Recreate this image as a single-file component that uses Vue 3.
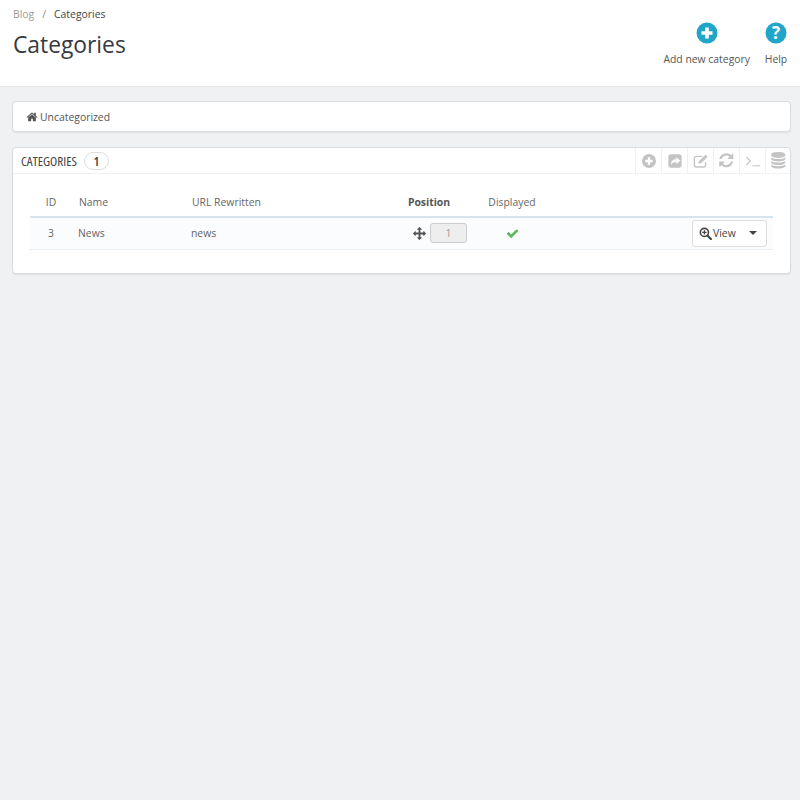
<template>
  <div class="page">
    <header class="page-head">
      <div class="head-left">
        <nav class="crumbs">
          <span class="crumb-link">Blog</span>
          <span class="crumb-sep">/</span>
          <span class="crumb-current">Categories</span>
        </nav>
        <h1>Categories</h1>
      </div>
      <div class="head-actions">
        <div class="head-action">
          <svg class="head-icon" viewBox="0 0 24 24">
            <circle cx="12" cy="12" r="10.5" fill="#21a6c9" />
            <path d="M12 6.5v11M6.5 12h11" stroke="#fff" stroke-width="3.6" />
          </svg>
          <span>Add new category</span>
        </div>
        <div class="head-action">
          <svg class="head-icon" viewBox="0 0 24 24">
            <circle cx="12" cy="12" r="10.5" fill="#21a6c9" />
            <text x="12" y="18" text-anchor="middle" class="q-mark">?</text>
          </svg>
          <span>Help</span>
        </div>
      </div>
    </header>

    <main class="content">
      <div class="tree-bar">
        <svg class="home-icon" viewBox="0 0 1792 1792">
          <path fill="#555" d="M1472 992v480q0 26-19 45t-45 19h-384v-384h-256v384h-384q-26 0-45-19t-19-45v-480q0-1 .5-3t.5-3l575-474 575 474q1 2 1 6zm223-69l-62 74q-8 9-21 11h-3q-13 0-21-7l-692-577-692 577q-12 8-24 7-13-2-21-11l-62-74q-8-10-7-23.5t11-21.5l719-599q32-26 76-26t76 26l244 204v-195q0-14 9-23t23-9h192q14 0 23 9t9 23v408l219 182q10 8 11 21.5t-7 23.5z" />
        </svg>
        <span>Uncategorized</span>
      </div>

      <section class="panel">
        <div class="panel-head">
          <div class="panel-title">
            <span class="title-text">CATEGORIES</span>
            <span class="badge">1</span>
          </div>
          <div class="tools">
            <div class="tool">
              <svg viewBox="0 0 24 24">
                <circle cx="12" cy="12" r="10.5" fill="#c4c4c4" />
                <path d="M12 6.5v11M6.5 12h11" stroke="#fff" stroke-width="3.4" />
              </svg>
            </div>
            <div class="tool">
              <svg viewBox="0 0 24 24">
                <rect x="2" y="2" width="20" height="20" rx="4" fill="#c4c4c4" />
                <path d="M6 18c0-6 3-8.500 8-8.500V6l6 5.500-6 5.500v-3.500c-4 0-6 1-8 4.500z" fill="#fff" />
              </svg>
            </div>
            <div class="tool">
              <svg viewBox="0 0 24 24">
                <path d="M19 14v4a3 3 0 0 1-3 3H5a3 3 0 0 1-3-3V8a3 3 0 0 1 3-3h9" fill="none" stroke="#c4c4c4" stroke-width="2" />
                <path d="M9 12L19 2.500l3 3L12 15.500l-4 .8z" fill="#c4c4c4" />
              </svg>
            </div>
            <div class="tool">
              <svg class="fa" viewBox="0 0 1792 1792">
                <path fill="#c4c4c4" d="M1639 1056q0 5-1 7-64 268-268 434.500t-478 166.500q-146 0-282.500-55t-243.500-157l-129 129q-19 19-45 19t-45-19-19-45v-448q0-26 19-45t45-19h448q26 0 45 19t19 45-19 45l-137 137q71 66 161 102t187 36q134 0 250-65t186-179q11-17 53-117 8-23 30-23h192q13 0 22.500 9.500t9.500 22.500zm25-800v448q0 26-19 45t-45 19h-448q-26 0-45-19t-19-45 19-45l138-138q-148-137-349-137-134 0-250 65t-186 179q-11 17-53 117-8 23-30 23h-199q-13 0-22.500-9.500t-9.500-22.500v-7q65-268 270-434.500t480-166.500q146 0 284 55.500t245 156.500l130-129q19-19 45-19t45 19 19 45z" />
              </svg>
            </div>
            <div class="tool">
              <svg viewBox="0 0 24 24">
                <path d="M2 6l6 6-6 6M11 19h12" fill="none" stroke="#c4c4c4" stroke-width="1.600" />
              </svg>
            </div>
            <div class="tool">
              <svg class="fa" viewBox="0 0 1792 1792">
                <path fill="#c4c4c4" d="M896 768q237 0 443-43t325-127v170q0 69-103 128t-280 93.500-385 34.500-385-34.500-280-93.500-103-128v-170q119 84 325 127t443 43zm0 768q237 0 443-43t325-127v170q0 69-103 128t-280 93.500-385 34.500-385-34.500-280-93.500-103-128v-170q119 84 325 127t443 43zm0-384q237 0 443-43t325-127v170q0 69-103 128t-280 93.500-385 34.500-385-34.500-280-93.500-103-128v-170q119 84 325 127t443 43zm0-1152q208 0 385 34.500t280 93.500 103 128v128q0 69-103 128t-280 93.500-385 34.500-385-34.500-280-93.500-103-128v-128q0-69 103-128t280-93.500 385-34.500z" />
              </svg>
            </div>
          </div>
        </div>

        <table class="grid">
          <thead>
            <tr>
              <th class="col-id">ID</th>
              <th class="col-name">Name</th>
              <th class="col-url">URL Rewritten</th>
              <th class="col-pos">Position</th>
              <th class="col-shown">Displayed</th>
              <th class="col-act"></th>
            </tr>
          </thead>
          <tbody>
            <tr v-for="row in rows" :key="row.id">
              <td class="col-id">{{ row.id }}</td>
              <td class="col-name">{{ row.name }}</td>
              <td class="col-url">{{ row.url }}</td>
              <td class="col-pos">
                <div class="pos-cell">
                  <svg class="move-icon" viewBox="0 0 1792 1792">
                    <path fill="#555" d="M1792 896q0 26-19 45l-256 256q-19 19-45 19t-45-19-19-45v-128h-384v384h128q26 0 45 19t19 45-19 45l-256 256q-19 19-45 19t-45-19l-256-256q-19-19-19-45t19-45 45-19h128v-384h-384v128q0 26-19 45t-45 19-45-19l-256-256q-19-19-19-45t19-45l256-256q19-19 45-19t45 19 19 45v128h384v-384h-128q-26 0-45-19t-19-45 19-45l256-256q19-19 45-19t45 19l256 256q19 19 19 45t-19 45-45 19h-128v384h384v-128q0-26 19-45t45-19 45 19l256 256q19 19 19 45z" />
                  </svg>
                  <span class="pos-box">{{ row.position }}</span>
                </div>
              </td>
              <td class="col-shown">
                <svg class="check-icon" viewBox="0 0 1792 1792">
                  <path fill="#5cb85c" d="M1671 566q0 40-28 68l-724 724-136 136q-28 28-68 28t-68-28l-136-136-362-362q-28-28-28-68t28-68l136-136q28-28 68-28t68 28l294 295 656-657q28-28 68-28t68 28l136 136q28 28 28 68z" />
                </svg>
              </td>
              <td class="col-act">
                <div class="view-btn">
                  <svg class="zoom-icon" viewBox="0 0 24 24">
                    <circle cx="10" cy="10" r="7.500" fill="none" stroke="#444" stroke-width="3" />
                    <path d="M15.500 15.500L22 22" stroke="#444" stroke-width="4" stroke-linecap="round" />
                    <path d="M10 6v8M6 10h8" stroke="#444" stroke-width="2.400" />
                  </svg>
                  <span>View</span>
                  <i class="caret"></i>
                </div>
              </td>
            </tr>
          </tbody>
        </table>
      </section>
    </main>
  </div>
</template>

<script setup>
const rows = [{ id: 3, name: 'News', url: 'news', position: 1 }]
</script>

<style>
html, body { background: #eff1f2; }
</style>

<style scoped>
.page {
  min-height: 800px;
  background: #eff1f2;
  font-family: "Open Sans", sans-serif;
  font-size: 10.4px;
  color: #666;
}
.page-head {
  height: 87px;
  box-sizing: border-box;
  background: #fff;
  border-bottom: 1px solid #e4e6e8;
  display: flex;
  justify-content: space-between;
  padding: 0 12px 0 13px;
}
.crumbs { display: flex; padding-top: 7px; line-height: 15px; }
.crumb-link { color: #9a9a9a; }
.crumb-sep { color: #888; margin: 0 8px 0 8px; }
.crumb-current { color: #444; }
h1 {
  margin: 7px 0 0;
  font-size: 22.8px;
  font-weight: 400;
  line-height: 32px;
  color: #363a41;
}
.head-actions { display: flex; gap: 14px; padding-top: 21px; }
.head-action {
  display: flex;
  flex-direction: column;
  align-items: center;
  gap: 7px;
  color: #555;
  line-height: 15px;
}
.head-icon { width: 24px; height: 24px; }
.q-mark { font: 700 17px "Open Sans", sans-serif; fill: #fff; }

.content { padding: 14px 9px 0 12px; }
.tree-bar {
  height: 31px;
  box-sizing: border-box;
  display: flex;
  align-items: center;
  gap: 2px;
  padding-left: 13px;
  background: #fff;
  border: 1px solid #d9dcde;
  border-radius: 4px;
  box-shadow: 0 1px 1px #dfe1e3;
  color: #555;
}
.home-icon { width: 12px; height: 12px; }

.panel {
  margin-top: 15px;
  height: 127px;
  box-sizing: border-box;
  background: #fff;
  border: 1px solid #d9dcde;
  border-radius: 4px;
  box-shadow: 0 1px 1px #dfe1e3;
}
.panel-head {
  height: 25px;
  display: flex;
  justify-content: space-between;
  border-bottom: 1px solid #f2f2f2;
}
.panel-title { display: flex; align-items: center; padding-left: 8px; gap: 7px; }
.title-text {
  font-family: "Open Sans", sans-serif;
  font-stretch: 75%;
  font-size: 13.2px;
  color: #444;
}
.badge {
  width: 25px;
  height: 18px;
  box-sizing: border-box;
  border: 1px solid #ddd;
  border-radius: 9px;
  text-align: center;
  line-height: 16px;
  font-size: 13px;
  font-stretch: 75%;
  font-weight: 600;
  color: #444;
}
.tools { display: flex; margin-right: -1px; }
.tool {
  width: 26px;
  box-sizing: border-box;
  border-left: 1px solid #f0f0f0;
  display: flex;
  align-items: center;
  justify-content: center;
}
.tool svg { width: 16px; height: 16px; }
.tool svg.fa { width: 16.5px; height: 16.5px; }

.grid {
  width: 743px;
  margin: 0 0 0 17px;
  border-collapse: collapse;
  table-layout: fixed;
}
.grid th {
  height: 43px;
  box-sizing: border-box;
  padding: 14px 0 0;
  font-weight: 400;
  text-align: left;
  border-bottom: 2px solid #d5e5f0;
  color: #666;
}
.grid td {
  height: 30px;
  padding: 0 0 1px;
  background: #fbfcfd;
  border-bottom: 1px solid #eaedef;
  color: #666;
}
.grid .col-id { width: 48px; text-align: center; padding-right: 6px; box-sizing: border-box; }
.grid .col-name { width: 113px; }
.grid .col-url { width: 200px; }
.grid th.col-name, .grid th.col-url { padding-left: 1px; }
.grid .col-pos { width: 76px; text-align: center; }
.grid th.col-pos { font-weight: 700; color: #555; }
.grid .col-shown { width: 90px; text-align: center; }
.grid .col-act { text-align: right; padding-right: 6px; }
.pos-cell { display: flex; align-items: center; justify-content: flex-end; gap: 4px; }
.move-icon { width: 13px; height: 13px; }
.pos-box {
  width: 37px;
  height: 20px;
  box-sizing: border-box;
  background: #eee;
  border: 1px solid #ccc;
  border-radius: 3px;
  color: #999;
  text-align: center;
  line-height: 18px;
}
.check-icon { width: 13px; height: 13px; vertical-align: middle; }
.view-btn {
  display: inline-flex;
  align-items: center;
  width: 75px;
  height: 27px;
  box-sizing: border-box;
  padding-left: 6px;
  background: #fff;
  border: 1px solid #ddd;
  border-radius: 3px;
  color: #444;
  gap: 1px;
  text-align: left;
  vertical-align: middle;
}
.zoom-icon { width: 13px; height: 13px; }
.caret {
  margin-left: 12px;
  width: 0;
  height: 0;
  border-left: 4px solid transparent;
  border-right: 4px solid transparent;
  border-top: 4px solid #444;
}
</style>
